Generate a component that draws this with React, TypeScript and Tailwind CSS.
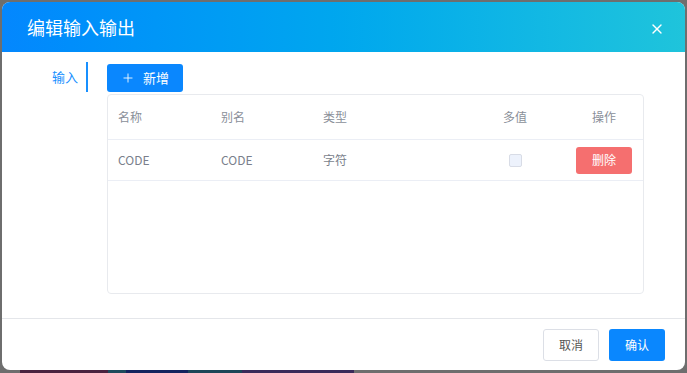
import { X, Plus } from "lucide-react";

const font = { fontFamily: '"Noto Sans CJK SC", "Noto Sans", sans-serif' };

export default function App() {
  return (
    <div className="relative h-[373px] w-[687px] overflow-hidden bg-[#6e6e6e]" style={font}>
      <div className="absolute bottom-0 left-[20px] flex h-[4px]">
        <div className="w-[88px] bg-[#4a2340]" />
        <div className="w-[18px] bg-[#1e4b5c]" />
        <div className="w-[62px] bg-[#14235e]" />
        <div className="w-[54px] bg-[#1c4658]" />
        <div className="w-[112px] bg-[#3a2a5a]" />
      </div>
      <div className="absolute left-[2px] top-[2px] flex h-[368px] w-[683px] flex-col overflow-hidden rounded-[8px] bg-white">
        <header className="flex h-[50px] shrink-0 items-center justify-between bg-gradient-to-r from-[#0487fe] to-[#1fc4db] pl-[25px] pr-[20px]">
          <h1 className="text-[18px] leading-none text-white">编辑输入输出</h1>
          <X className="mt-[4px] h-[16px] w-[16px] text-white" strokeWidth={2} />
        </header>
        <div className="flex flex-1">
          <div className="flex w-[86px] shrink-0 justify-end pt-[10px]">
            <div className="flex h-[30px] items-center border-r-2 border-[#1890ff] pr-[8px] text-[13px] text-[#1890ff]">
              输入
            </div>
          </div>
          <div className="ml-[19px] flex w-[537px] flex-col pt-[12px]">
            <button className="flex h-[28px] w-[76px] items-center justify-center gap-[8px] rounded-[3px] bg-[#0a87fe] text-[13px] text-white">
              <Plus className="h-[14px] w-[14px]" strokeWidth={1.5} />
              新增
            </button>
            <div className="mt-[2px] h-[200px] rounded-[4px] border border-[#e8eaee] text-[12px]">
              <div className="flex h-[45px] items-center border-b border-[#ebeef5] text-[#8a8f99]">
                <div className="w-[103px] pl-[10px]">名称</div>
                <div className="w-[102px] pl-[10px]">别名</div>
                <div className="w-[162px] pl-[10px]">类型</div>
                <div className="flex w-[80px] justify-center">多值</div>
                <div className="flex flex-1 justify-center pl-[10px]">操作</div>
              </div>
              <div className="flex h-[41px] items-center border-b border-[#ebeef5] text-[#7a7f8c]">
                <div className="w-[103px] pl-[10px]">CODE</div>
                <div className="w-[102px] pl-[10px]">CODE</div>
                <div className="w-[162px] pl-[10px]">字符</div>
                <div className="flex w-[80px] justify-center">
                  <span className="h-[13px] w-[13px] rounded-[2px] border border-[#d8dce6] bg-[#edf2fc]" />
                </div>
                <div className="flex flex-1 justify-center pl-[10px]">
                  <button className="h-[27px] w-[56px] rounded-[3px] bg-[#f56f6f] text-[12px] text-white">删除</button>
                </div>
              </div>
            </div>
          </div>
        </div>
        <footer className="flex h-[52px] shrink-0 items-start justify-end gap-[10px] border-t border-[#e4e6ea] pr-[20px] pt-[10px]">
          <button className="h-[32px] w-[56px] rounded-[3px] border border-[#dcdfe6] bg-white text-[12px] text-[#555]">取消</button>
          <button className="h-[32px] w-[56px] rounded-[3px] bg-[#0a87fe] text-[12px] text-white">确认</button>
        </footer>
      </div>
    </div>
  );
}
